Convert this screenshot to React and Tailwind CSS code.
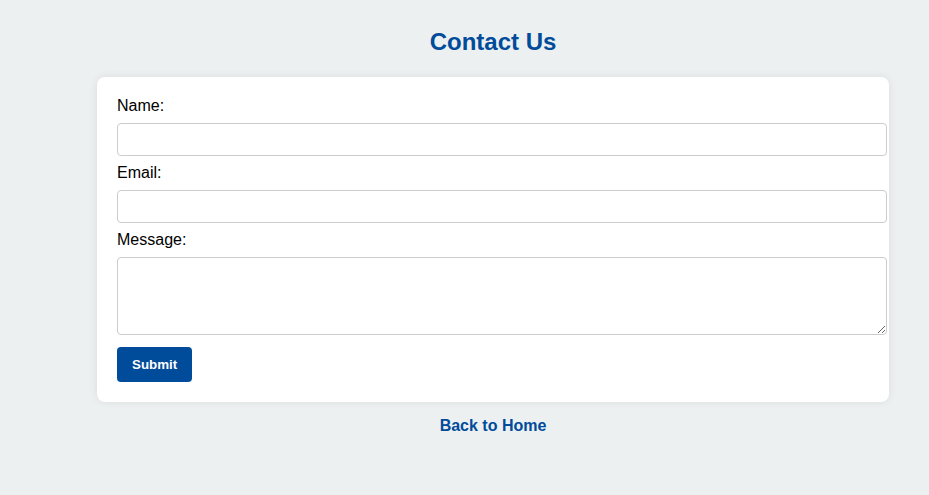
export default function App() {
  return (
    <div className="min-h-[495px] bg-[#edf0f1] pt-[28px] font-['Liberation_Sans',Arial,sans-serif] text-black">
      <div className="ml-[97px] w-[792px]">
        <h2 className="text-center text-[24px] leading-[28px] font-bold text-[#004b9a]">
          Contact Us
        </h2>

        <form
          onSubmit={(e) => e.preventDefault()}
          className="mt-[21px] rounded-lg bg-white p-5 shadow-[0_0_8px_rgba(0,0,0,0.08)]"
        >
          <label className="block text-base leading-[18px]">Name:</label>
          <input
            type="text"
            className="mt-2 block h-[33px] w-[770px] rounded border border-[#cccccc] px-2 outline-none"
          />

          <label className="mt-2 block text-base leading-[18px]">Email:</label>
          <input
            type="email"
            className="mt-2 block h-[33px] w-[770px] rounded border border-[#cccccc] px-2 outline-none"
          />

          <label className="mt-2 block text-base leading-[18px]">Message:</label>
          <textarea className="mt-2 block h-[78px] w-[770px] rounded border border-[#cccccc] px-2 py-2 outline-none" />

          <button
            type="submit"
            className="mt-[12px] h-[35px] rounded bg-[#004b9a] px-[15px] text-[13.33px] font-bold text-white"
          >
            Submit
          </button>
        </form>

        <div className="mt-[12px] text-center">
          <a href="#" className="text-base leading-[18px] font-bold text-[#004b9a]">
            Back to Home
          </a>
        </div>
      </div>
    </div>
  )
}
